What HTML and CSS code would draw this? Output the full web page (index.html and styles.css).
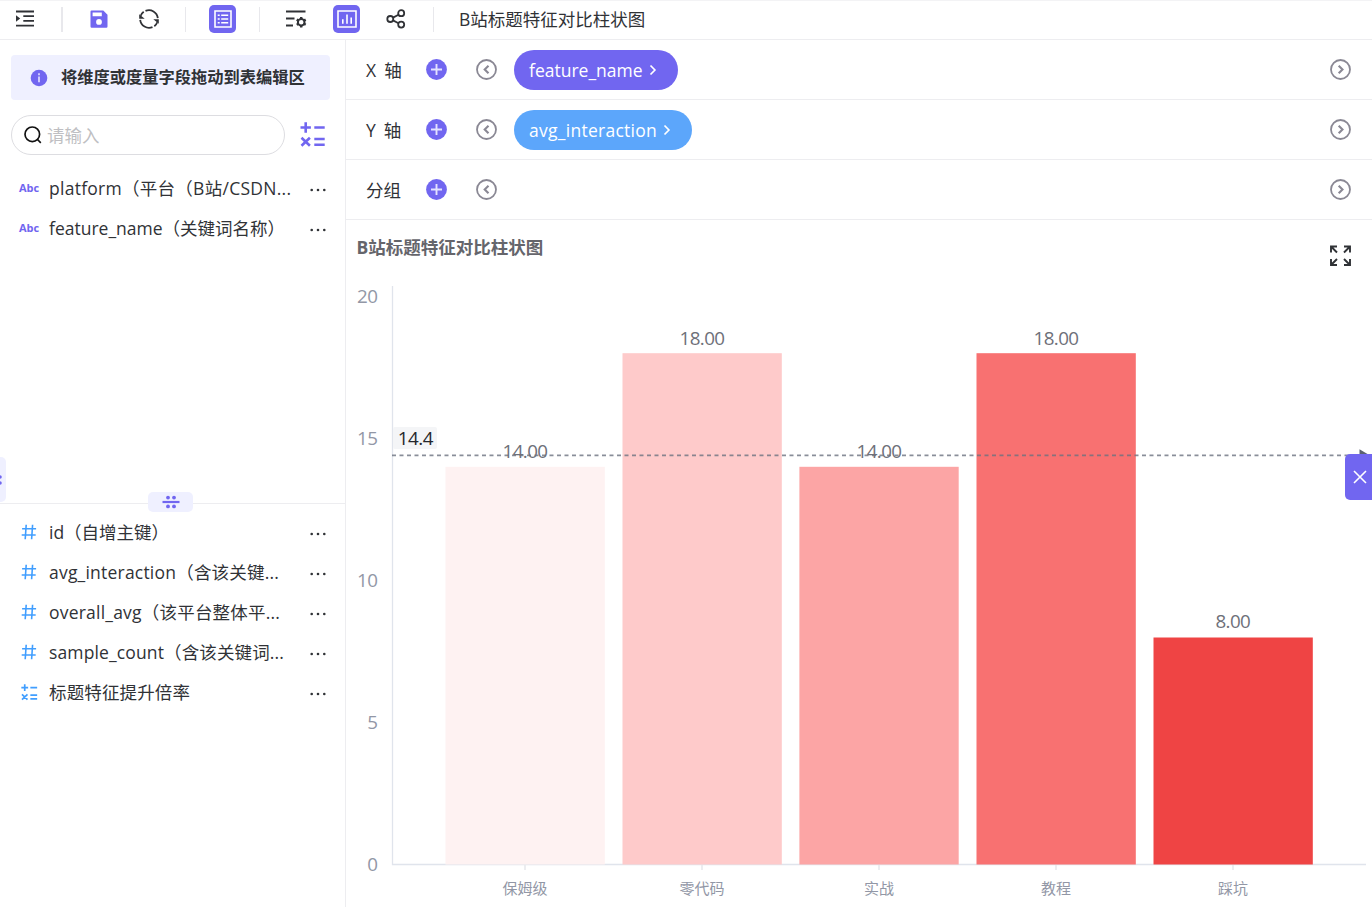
FILE: index.html
```html
<!DOCTYPE html>
<html lang="zh-CN">
<head>
    <meta charset="UTF-8">
    <title>B站标题特征对比柱状图</title>
    <link rel="stylesheet" href="styles.css">
</head>
<body>

<!-- 图标 -->
<svg class="sprite" width="0" height="0">
    <symbol id="plus" viewBox="0 0 22 22">
        <circle cx="10.5" cy="10.5" r="10.4" fill="#7166f0"/>
        <path d="M10.5 5v11M5 10.500h11" stroke="#e4e2ff" stroke-width="1.900"/>
    </symbol>
    <symbol id="left" viewBox="0 0 22 22">
        <circle cx="10.500" cy="10.500" r="9.500" fill="none" stroke="#8a8894" stroke-width="1.800"/>
        <path d="M12.500 6.700 8.700 10.500l3.800 3.800" fill="none" stroke="#8a8894" stroke-width="2.100"/>
    </symbol>
    <symbol id="right" viewBox="0 0 22 22">
        <circle cx="10.500" cy="10.500" r="9.500" fill="none" stroke="#8a8894" stroke-width="1.800"/>
        <path d="M8.700 6.700l3.800 3.800-3.800 3.800" fill="none" stroke="#8a8894" stroke-width="2.100"/>
    </symbol>
    <symbol id="more" viewBox="0 0 18 4">
        <circle cx="2.7" cy="2" r="1.3" fill="#303236"/>
        <circle cx="9" cy="2" r="1.3" fill="#303236"/>
        <circle cx="15.3" cy="2" r="1.3" fill="#303236"/>
    </symbol>
    <symbol id="hash" viewBox="0 0 16 16">
        <path d="M5.2.8 4.200 15.2M11.600.8l-1 14.4M1.100 4.800h14M.7 11h14" fill="none" stroke="#409eff" stroke-width="1.600"/>
    </symbol>
    <symbol id="calc" viewBox="0 0 26 26">
        <path d="M.5 5.500h10.400M5.700.3v10.400M14.300 5.500h10.400M1.500 15.800l8.400 8M9.900 15.800l-8.400 8M14.300 17h10.400M14.300 22.700h10.400" fill="none" stroke="currentColor" stroke-width="2.600"/>
    </symbol>
    <symbol id="arrow" viewBox="0 0 8 12">
        <path d="m1.5 1.5 4.4 4.5-4.4 4.5" fill="none" stroke="#fff" stroke-width="1.7"/>
    </symbol>
</svg>

<div class="page">
    <!-- 工具栏 -->
    <div class="toolbar">
        <div class="tool tool-1">
            <svg width="20" height="18" viewBox="0 0 20 18"><path d="M1 1.500h18M8.300 6.200H19M8.300 10.900H19M1 15.600h18" stroke="#303236" stroke-width="1.800"/><path d="M1 5.300 5.200 8.500 1 11.700z" fill="#303236"/></svg>
        </div>
        <div class="line line-1"></div>
        <div class="tool tool-2">
            <svg width="18" height="18" viewBox="0 0 18 18"><path fill-rule="evenodd" d="M1.500.5h11.800l4.200 4.200v11.800a1.200 1.200 0 0 1-1.200 1.200H1.700a1.200 1.200 0 0 1-1.200-1.200v-15a1 1 0 0 1 1-1zM2.600 2.500v3.800h9.200V2.500zM9 9a2.900 2.900 0 1 0 0 5.800a2.900 2.900 0 0 0 0-5.800z" fill="#7166f0"/></svg>
        </div>
        <div class="tool tool-3">
            <svg width="20" height="20" viewBox="0 0 20 20"><path d="M6.500 1.900a8.900 8.900 0 0 1 12.300 7.300M13.500 18.100A8.900 8.900 0 0 1 1.200 10.800M18.300 13.200a8.900 8.900 0 0 1-3 4M1.700 6.800a8.900 8.900 0 0 1 3-4" fill="none" stroke="#303236" stroke-width="1.800"/><path d="M14.300 10.200h5.500v4.600zM.2 5.200l5.500 4.600H.2z" fill="#303236"/></svg>
        </div>
        <div class="line line-2"></div>
        <div class="tool active tool-4">
            <svg width="18" height="18" viewBox="0 0 18 18"><path d="M1 1h16v16H1zM3.700 5.200h2M7.200 5.200h7M3.700 9h2M7.200 9h7M3.700 12.800h2M7.200 12.800h7" fill="none" stroke="#fff" stroke-width="1.600"/></svg>
        </div>
        <div class="line line-3"></div>
        <div class="tool tool-5">
            <svg width="22" height="18" viewBox="0 0 22 18"><path d="M1 1.500h19.500M1 8.500h8.500M1 15.500h7" stroke="#303236" stroke-width="1.800"/><circle cx="16.200" cy="12.200" r="3.300" fill="none" stroke="#303236" stroke-width="2"/><path d="M16.200 7v2M16.200 15.400v2M11.700 9.600l1.800 1M18.900 13.800l1.800 1M11.700 14.800l1.800-1M18.900 10.600l1.800-1" stroke="#303236" stroke-width="2.400"/></svg>
        </div>
        <div class="tool active tool-6">
            <svg width="20" height="18" viewBox="0 0 20 18"><path d="M1 1h18v16H1zM5.800 13.800V9.200M10 13.800V4.600M14.200 13.800V7.500" fill="none" stroke="#fff" stroke-width="1.600"/></svg>
        </div>
        <div class="tool tool-7">
            <svg width="20" height="20" viewBox="0 0 20 20"><g fill="none" stroke="#303236" stroke-width="1.800"><circle cx="4.300" cy="10" r="3"/><circle cx="15.200" cy="4.200" r="3"/><circle cx="15.200" cy="15.600" r="3"/><path d="M7 8.600l5.500-2.900M7 11.400l5.500 2.800"/></g></svg>
        </div>
        <div class="line line-4"></div>
        <div class="name">B站标题特征对比柱状图</div>
    </div>

    <div class="content">
        <!-- 字段列表 -->
        <div class="sidebar">
            <div class="tip">
                <svg width="18" height="18" viewBox="0 0 18 18"><circle cx="9" cy="9" r="8.300" fill="#7166f0"/><path d="M9 7.600v5.600M9 4.300v2" stroke="#dedbff" stroke-width="1.700"/></svg>
                <span>将维度或度量字段拖动到表编辑区</span>
            </div>
            <div class="search">
                <div class="search-box">
                    <svg width="20" height="20" viewBox="0 0 20 20"><circle cx="9.300" cy="9.300" r="7.300" fill="none" stroke="#111" stroke-width="1.700"/><path d="m14.500 14.500 3.300 3.300" stroke="#111" stroke-width="1.700"/></svg>
                    <span>请输入</span>
                </div>
                <svg class="calc" width="26" height="26"><use href="#calc"/></svg>
            </div>
            <div class="dimensions">
                <div class="field"><span class="type">Abc</span><span class="label wide">platform（平台（B站/CSDN...</span><svg class="more"><use href="#more"/></svg></div>
                <div class="field"><span class="type">Abc</span><span class="label">feature_name（关键词名称）</span><svg class="more"><use href="#more"/></svg></div>
            </div>
            <div class="measures">
                <div class="handle">
                    <svg width="18" height="14" viewBox="0 0 18 14"><path d="M.5 7h17" stroke="#7166f0" stroke-width="2.200"/><g fill="#7166f0"><circle cx="6" cy="2.600" r="1.900"/><circle cx="12" cy="2.600" r="1.900"/><circle cx="6" cy="11.400" r="1.900"/><circle cx="12" cy="11.400" r="1.900"/></g></svg>
                </div>
                <div class="field"><span class="type"><svg class="hash"><use href="#hash"/></svg></span><span class="label">id（自增主键）</span><svg class="more"><use href="#more"/></svg></div>
                <div class="field"><span class="type"><svg class="hash"><use href="#hash"/></svg></span><span class="label medium">avg_interaction（含该关键...</span><svg class="more"><use href="#more"/></svg></div>
                <div class="field"><span class="type"><svg class="hash"><use href="#hash"/></svg></span><span class="label medium">overall_avg（该平台整体平...</span><svg class="more"><use href="#more"/></svg></div>
                <div class="field"><span class="type"><svg class="hash"><use href="#hash"/></svg></span><span class="label narrow">sample_count（含该关键词...</span><svg class="more"><use href="#more"/></svg></div>
                <div class="field"><span class="type"><svg class="hash blue"><use href="#calc"/></svg></span><span class="label narrow">标题特征提升倍率</span><svg class="more"><use href="#more"/></svg></div>
            </div>
        </div>

        <!-- 图表编辑区 -->
        <div class="main">
            <div class="axis">
                <span class="axis-name">X 轴</span>
                <svg class="icon"><use href="#plus"/></svg>
                <svg class="icon prev"><use href="#left"/></svg>
                <div class="pill purple"><span>feature_name</span><svg width="8" height="12"><use href="#arrow"/></svg></div>
                <svg class="icon next"><use href="#right"/></svg>
            </div>
            <div class="axis">
                <span class="axis-name">Y 轴</span>
                <svg class="icon"><use href="#plus"/></svg>
                <svg class="icon prev"><use href="#left"/></svg>
                <div class="pill sky"><span>avg_interaction</span><svg width="8" height="12"><use href="#arrow"/></svg></div>
                <svg class="icon next"><use href="#right"/></svg>
            </div>
            <div class="axis">
                <span class="axis-name">分组</span>
                <svg class="icon"><use href="#plus"/></svg>
                <svg class="icon prev"><use href="#left"/></svg>
                <svg class="icon next"><use href="#right"/></svg>
            </div>

            <div class="chart">
                <svg width="1026" height="687" viewBox="346 220 1026 687">
                    <text class="chart-title" x="356.500" y="254">B站标题特征对比柱状图</text>
                    <path d="M1331 252.500V246.500H1337M1331.500 247l5.500 5.500M1344 246.500h6v6M1349.500 247l-5.500 5.500M1331 259v6h6M1331.500 264.500l5.500-5.500M1344 265h6v-6M1349.500 264.500l-5.500-5.500" fill="none" stroke="#303236" stroke-width="1.900"/>
                    <path d="M392.500 286v578.500H1366" fill="none" stroke="#e0e4ec" stroke-width="1.300"/>
                    <path d="M525 865v5M702 865v5M879 865v5M1056 865v5M1233 865v5" stroke="#e6e8ec" stroke-width="1.500"/>
                    <g class="axis-value">
                        <text x="377.500" y="302.800">20</text>
                        <text x="377.500" y="445">15</text>
                        <text x="377.500" y="587.200">10</text>
                        <text x="377.500" y="729.200">5</text>
                        <text x="377.500" y="871.400">0</text>
                    </g>
                    <rect x="445.500" y="466.800" width="159.300" height="397.700" fill="#fef2f2"/>
                    <rect x="622.500" y="353.200" width="159.300" height="511.300" fill="#fecaca"/>
                    <rect x="799.400" y="466.800" width="159.300" height="397.700" fill="#fca5a5"/>
                    <rect x="976.500" y="353.200" width="159.300" height="511.300" fill="#f87171"/>
                    <rect x="1153.500" y="637.500" width="159.300" height="227.000" fill="#ef4444"/>
                    <path d="M392 455.400h968" stroke="#6b7280" stroke-opacity=".8" stroke-width="1.600" stroke-dasharray="4 3.500"/>
                    <path d="M1359.500 449.300 1370 455.400l-10.500 6z" fill="#5b6270"/>
                    <rect x="393" y="427" width="44" height="22" rx="2" fill="#f4f5f7"/>
                    <text class="avg" x="397.800" y="445.200">14.4</text>
                    <g class="value">
                        <text x="525" y="458.200">14.00</text>
                        <text x="702" y="345.200">18.00</text>
                        <text x="879" y="458.200">14.00</text>
                        <text x="1056" y="345.200">18.00</text>
                        <text x="1232.800" y="628.300">8.00</text>
                    </g>
                    <g class="category">
                        <text x="525" y="893.500">保姆级</text>
                        <text x="702" y="893.500">零代码</text>
                        <text x="879" y="893.500">实战</text>
                        <text x="1056" y="893.500">教程</text>
                        <text x="1233" y="893.500">踩坑</text>
                    </g>
                </svg>
            </div>
        </div>
    </div>

    <!-- 悬浮按钮 -->
    <div class="side-handle">
        <svg width="6" height="12" viewBox="0 0 6 12"><circle cx="0" cy="3" r="1.800" fill="#7166f0"/><circle cx="0" cy="9" r="1.800" fill="#7166f0"/></svg>
    </div>
    <div class="close">
        <svg width="14" height="14" viewBox="0 0 14 14"><path d="m1 1 12 12M13 1 1 13" stroke="#fff" stroke-width="1.600"/></svg>
    </div>
</div>

</body>
</html>
```
FILE: styles.css
```css
* {
    box-sizing: border-box;
}
body {
    margin: 0;
    font-family: "Open Sans", "Noto Sans CJK SC", sans-serif;
    font-size: 17.5px;
    color: #303236;
    background-color: #fff;
}
svg {
    display: block;
    flex-shrink: 0;
}
.sprite {
    position: absolute;
}
.page {
    position: relative;
    display: flex;
    flex-direction: column;
    height: 907px;
    overflow: hidden;
}

/* toolbar */
.toolbar {
    display: flex;
    align-items: center;
    height: 40px;
    border-top: 1px solid #f3f3f5;
    border-bottom: 1px solid #ededf0;
    padding: 0 0 2px 15px;
    flex-shrink: 0;
}
.tool {
    display: flex;
    align-items: center;
    justify-content: center;
}
.line {
    width: 1px;
    height: 25px;
    background-color: #e8e8ec;
}
.line-1 { margin: 0 27px 0 26px; width: 2px; }
.tool-1 { width: 20px; }
.tool-2 { width: 18px; }
.tool-3 { margin-left: 31px; width: 20px; }
.line-2 { margin: 0 23px 0 26px; }
.line-3 { margin: 0 25px 0 23px; }
.tool-5 { width: 22px; }
.tool-6 { margin-left: 26px; }
.tool-7 { margin-left: 26px; width: 20px; }
.line-4 { margin: 0 25px 0 27px; }
.active {
    width: 27px;
    height: 28px;
    border-radius: 5px;
    background-color: #7166f0;
}
.name {
    line-height: 36px;
}

.content {
    display: flex;
    flex: 1;
}

/* sidebar */
.sidebar {
    display: flex;
    flex-direction: column;
    width: 346px;
    border-right: 1px solid #ededf0;
    padding-top: 15px;
}
.tip {
    display: flex;
    align-items: center;
    gap: 13px;
    height: 45px;
    margin: 0 15px 15px 11px;
    padding-left: 19px;
    border-radius: 4px;
    background-color: #eff0ff;
    font-size: 16.25px;
    font-weight: bold;
}
.tip span {
    padding-bottom: 3px;
}
.search {
    display: flex;
    align-items: center;
    gap: 15px;
    padding-left: 11px;
    height: 40px;
}
.search-box {
    display: flex;
    align-items: center;
    gap: 4px;
    width: 274px;
    height: 40px;
    padding: 0 0 1px 11px;
    border: 1px solid #dddde1;
    border-radius: 20px;
    color: #bfbfc3;
}
.calc {
    color: #7166f0;
}
.dimensions {
    height: 348px;
    padding-top: 12px;
}
.dimensions .more {
    margin-top: 6px;
}
.measures {
    position: relative;
    border-top: 1px solid #ededf0;
    padding-top: 8px;
}
.handle {
    position: absolute;
    left: 148px;
    top: -12px;
    width: 45px;
    height: 20px;
    display: flex;
    align-items: center;
    justify-content: center;
    border-radius: 5px;
    background-color: #eff0ff;
}
.field {
    display: flex;
    align-items: center;
    height: 40px;
    padding-left: 19px;
}
.type {
    width: 30px;
    flex-shrink: 0;
    font-size: 11px;
    font-weight: bold;
    color: #7166f0;
}
.hash {
    width: 16px;
    height: 16px;
    margin-left: 2px;
}
.blue {
    width: 17px;
    height: 17px;
    color: #409eff;
}
.label {
    width: 260px;
    white-space: nowrap;
}
.measures .label {
    padding-bottom: 2px;
}
.wide { letter-spacing: 0.27px; }
.medium { letter-spacing: 0.21px; }
.narrow { letter-spacing: 0.13px; }
.more {
    width: 18px;
    height: 4px;
    margin-top: 4px;
}

/* axis rows */
.main {
    flex: 1;
}
.axis {
    display: flex;
    align-items: center;
    height: 60px;
    padding: 0 20px;
    border-bottom: 1px solid #ededf0;
}
.axis-name {
    width: 60px;
    word-spacing: 3.5px;
}
.icon {
    width: 22px;
    height: 22px;
}
.prev {
    margin: 0 16px 0 28px;
}
.next {
    margin-left: auto;
}
.pill {
    display: flex;
    align-items: center;
    gap: 6px;
    height: 40px;
    padding: 0 20px 0 15px;
    border-radius: 20px;
    color: #fff;
}
.purple {
    width: 164px;
    background-color: #7166f0;
}
.sky {
    width: 178px;
    background-color: #5ca6fb;
    letter-spacing: 0.27px;
}

/* chart */
.chart-title {
    font-size: 17.5px;
    font-weight: bold;
    fill: #65656b;
}
.axis-value {
    font-size: 18.8px;
    letter-spacing: -0.5px;
    fill: #9297a6;
    text-anchor: end;
}
.avg {
    font-size: 18.8px;
    letter-spacing: -0.5px;
    fill: #25272c;
}
.value {
    font-size: 18.8px;
    letter-spacing: -0.6px;
    fill: #6e7079;
    text-anchor: middle;
}
.category {
    font-size: 15px;
    fill: #9297a6;
    text-anchor: middle;
}

/* floating */
.side-handle {
    position: absolute;
    left: 0;
    top: 457px;
    width: 6px;
    height: 45px;
    display: flex;
    align-items: center;
    border-radius: 0 5px 5px 0;
    background-color: #eff0ff;
}
.close {
    position: absolute;
    right: 0;
    top: 454px;
    width: 27px;
    height: 46px;
    display: flex;
    align-items: center;
    padding-left: 8px;
    border-radius: 5px 0 0 5px;
    background-color: #7166f0;
}
```
